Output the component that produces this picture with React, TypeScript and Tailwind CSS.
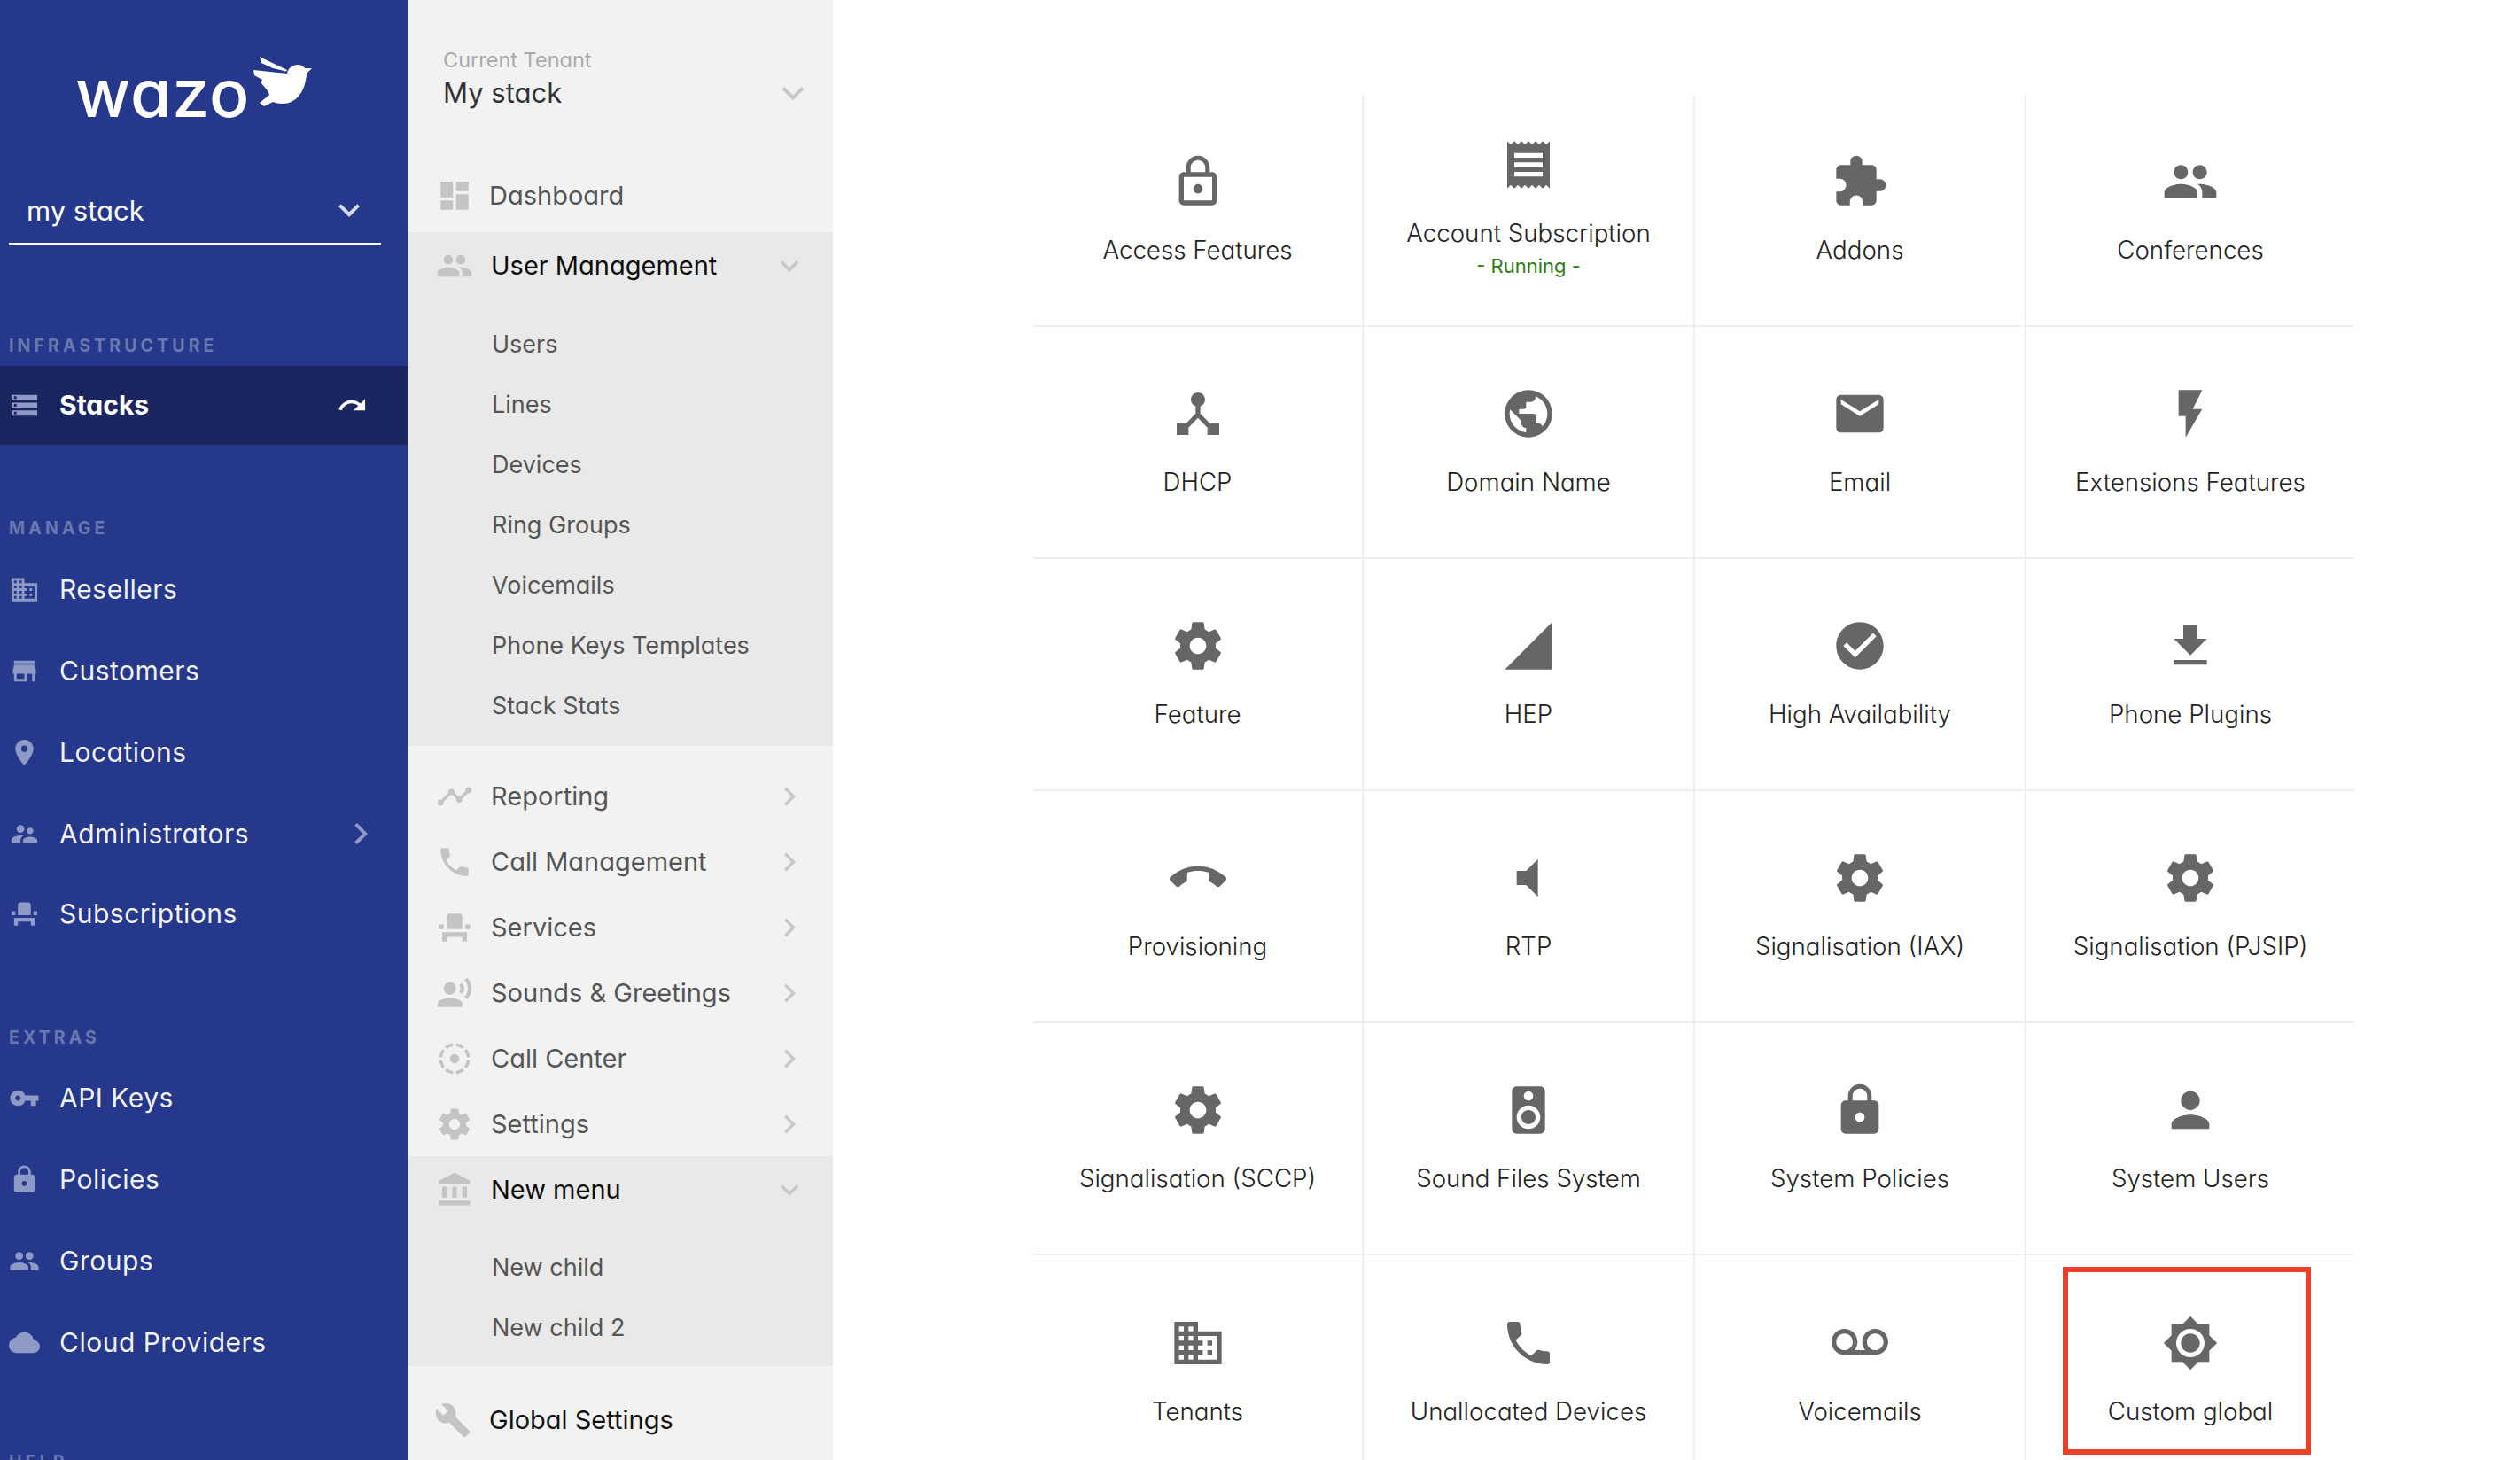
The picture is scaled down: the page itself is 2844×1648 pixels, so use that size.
import React from "react";
import {
  MdLockOutline, MdReceipt, MdExtension, MdPeople, MdDeviceHub, MdPublic, MdEmail, MdFlashOn, MdSignalCellular4Bar,
  MdCheckCircle, MdFileDownload, MdCallEnd, MdVolumeMute, MdSpeaker, MdLock, MdPerson, MdBusiness, MdPhone, MdVoicemail,
  MdBrightness7, MdDashboard, MdTimeline, MdEventSeat, MdRecordVoiceOver, MdFilterTiltShift, MdAccountBalance, MdBuild,
  MdStorage, MdRedo, MdStore, MdPlace, MdSupervisorAccount, MdVpnKey, MdCloud, MdKeyboardArrowDown, MdKeyboardArrowRight,
} from "react-icons/md";

type Ic = React.ComponentType<{ className?: string; size?: number }>;

function Gear({ size = 64, className = "" }: { size?: number; className?: string }) {
  return (
    <svg viewBox="0 0 24 24" width={size} height={size} className={className} fill="currentColor">
      <path d="M19.43 12.98c.04-.32.07-.64.07-.98s-.03-.66-.07-.98l2.11-1.65c.19-.15.24-.42.12-.64l-2-3.46c-.12-.22-.39-.3-.61-.22l-2.49 1c-.52-.4-1.08-.73-1.69-.98l-.38-2.65C14.46 2.18 14.25 2 14 2h-4c-.25 0-.46.18-.49.42l-.38 2.65c-.61.25-1.17.59-1.69.98l-2.49-1c-.23-.09-.49 0-.61.22l-2 3.46c-.13.22-.07.49.12.64l2.11 1.65c-.04.32-.07.65-.07.98s.03.66.07.98l-2.11 1.65c-.19.15-.24.42-.12.64l2 3.46c.12.22.39.3.61.22l2.49-1c.52.4 1.08.73 1.69.98l.38 2.65c.03.24.24.42.49.42h4c.25 0 .46-.18.49-.42l.38-2.65c.61-.25 1.17-.59 1.69-.98l2.49 1c.23.09.49 0 .61-.22l2-3.46c.12-.22.07-.49-.12-.64l-2.11-1.65zM12 15.5c-1.93 0-3.5-1.57-3.5-3.5s1.57-3.5 3.5-3.5 3.5 1.57 3.5 3.5-1.57 3.5-3.5 3.5z" />
    </svg>
  );
}

function Bird() {
  return (
    <svg viewBox="0 0 70 62" width={70} height={62} fill="#ffffff" className="ml-[2px] self-start">
      <path d="M9 2 L40 17 L39 18.500 L24 15 L11 9 Z" />
      <path d="M2 17 L40 21 C41 15 46 11 52 11 C56 11 59 13 60 15 L68 15 L62 21 C62 23 62 25 61 28 C59 42 50 55 35 55 C30 55 27 54 24 53 L14 58 L9 54 L20 45 C19 40 14 36 10 31 L12 28 L3 23 Z" />
    </svg>
  );
}

function Label({ text, cls }: { text: string; cls: string }) {
  return <div className={`h-[26px] px-[10px] flex items-center text-[19.500px] font-bold tracking-[4.100px] text-[#6a78b0] ${cls}`}>{text}</div>;
}

function BlueRow({ icon: I, text, arrow, cls = "" }: { icon: Ic; text: string; arrow?: boolean; cls?: string }) {
  return (
    <div className={`h-[92px] flex items-center pl-[10px] relative ${cls}`}>
      <I size={35} className="text-[#8f99c6] shrink-0" />
      <span className="ml-[22px] text-[30px] tracking-[0.500px] text-white/95">{text}</span>
      {arrow && <MdKeyboardArrowRight size={48} className="absolute left-[383px] text-[#8f99c6]" />}
    </div>
  );
}

function GrayRow({ icon: I, text, open }: { icon: Ic; text: string; open?: boolean }) {
  return (
    <div className="h-[74px] flex items-center pl-[32px] pr-[28px]">
      <I size={42} className="text-[#c4c4c4] shrink-0" />
      <span className={`ml-[20px] flex-1 text-[29px] ${open ? "text-[#0c0c0c]" : "text-[#555555]"}`}>{text}</span>
      {open ? <MdKeyboardArrowDown size={42} className="text-[#c8c8c8]" /> : <MdKeyboardArrowRight size={42} className="text-[#c8c8c8]" />}
    </div>
  );
}

function Sub({ text }: { text: string }) {
  return <div className="h-[68px] flex items-center pl-[95px] text-[27px] text-[#555555]">{text}</div>;
}

const cells: { icon: Ic; label: string; running?: boolean }[] = [
  { icon: MdLockOutline, label: "Access Features" },
  { icon: MdReceipt, label: "Account Subscription", running: true },
  { icon: MdExtension, label: "Addons" },
  { icon: MdPeople, label: "Conferences" },
  { icon: MdDeviceHub, label: "DHCP" },
  { icon: MdPublic, label: "Domain Name" },
  { icon: MdEmail, label: "Email" },
  { icon: MdFlashOn, label: "Extensions Features" },
  { icon: Gear, label: "Feature" },
  { icon: MdSignalCellular4Bar, label: "HEP" },
  { icon: MdCheckCircle, label: "High Availability" },
  { icon: MdFileDownload, label: "Phone Plugins" },
  { icon: MdCallEnd, label: "Provisioning" },
  { icon: MdVolumeMute, label: "RTP" },
  { icon: Gear, label: "Signalisation (IAX)" },
  { icon: Gear, label: "Signalisation (PJSIP)" },
  { icon: Gear, label: "Signalisation (SCCP)" },
  { icon: MdSpeaker, label: "Sound Files System" },
  { icon: MdLock, label: "System Policies" },
  { icon: MdPerson, label: "System Users" },
  { icon: MdBusiness, label: "Tenants" },
  { icon: MdPhone, label: "Unallocated Devices" },
  { icon: MdVoicemail, label: "Voicemails" },
  { icon: MdBrightness7, label: "Custom global" },
];

export default function App() {
  return (
    <div className="flex h-[1648px] w-[2844px] overflow-hidden bg-white [font-family:Inter,sans-serif] [font-feature-settings:'cv11']">
      {/* Primary sidebar */}
      <aside className="w-[460px] shrink-0 bg-[#26388b] overflow-hidden">
        <div className="h-[200px] pl-[85px] pt-[62px] flex">
          <div className="flex items-start">
            <span className="text-[75px] leading-[75px] font-medium text-white tracking-[1px] mt-[5px]">wazo</span>
            <Bird />
          </div>
        </div>
        <div className="mx-[10px] w-[420px] h-[76px] border-b-2 border-white flex items-center pl-[20px] pr-[12px]">
          <span className="flex-1 text-[31px] text-white pt-[3px]">my stack</span>
          <MdKeyboardArrowDown size={48} className="text-[#d5d8ea]" />
        </div>
        <Label text="INFRASTRUCTURE" cls="mt-[102px]" />
        <div className="mt-[9px] h-[89px] bg-[#1b2660] flex items-center pl-[10px]">
          <MdStorage size={35} className="text-[#8f99c6] shrink-0" />
          <span className="ml-[22px] flex-1 text-[30px] font-bold text-white">Stacks</span>
          <MdRedo size={35} className="text-white mr-[45px]" />
        </div>
        <Label text="MANAGE" cls="mt-[82px] mb-[9px]" />
        <BlueRow icon={MdBusiness} text="Resellers" />
        <BlueRow icon={MdStore} text="Customers" />
        <BlueRow icon={MdPlace} text="Locations" />
        <BlueRow icon={MdSupervisorAccount} text="Administrators" arrow />
        <BlueRow icon={MdEventSeat} text="Subscriptions" cls="-mt-[2px]" />
        <Label text="EXTRAS" cls="mt-[82px] mb-[8px]" />
        <BlueRow icon={MdVpnKey} text="API Keys" />
        <BlueRow icon={MdLock} text="Policies" />
        <BlueRow icon={MdPeople} text="Groups" />
        <BlueRow icon={MdCloud} text="Cloud Providers" />
        <Label text="HELP" cls="mt-[77px]" />
      </aside>

      {/* Secondary sidebar */}
      <aside className="w-[480px] shrink-0 bg-[#f2f2f2] overflow-hidden">
        <div className="h-[175px] pl-[40px] pr-[20px] pt-[52px]">
          <div className="text-[23.500px] leading-[32px] text-[#aaaaaa]">Current Tenant</div>
          <div className="flex items-center h-[42px]">
            <span className="flex-1 text-[31px] text-[#333333]">My stack</span>
            <MdKeyboardArrowDown size={50} className="text-[#c8c8c8]" />
          </div>
        </div>
        <div className="h-[87px] flex items-center pl-[32px] pt-[4px]">
          <MdDashboard size={42} className="text-[#c4c4c4] shrink-0" />
          <span className="ml-[18px] text-[29px] text-[#555555]">Dashboard</span>
        </div>
        <div className="bg-[#e9e9e9] h-[580px] pt-[1px]">
          <GrayRow icon={MdPeople} text="User Management" open />
          <div className="mt-[18px]">
            {["Users", "Lines", "Devices", "Ring Groups", "Voicemails", "Phone Keys Templates", "Stack Stats"].map((t) => (
              <Sub key={t} text={t} />
            ))}
          </div>
        </div>
        <div className="pt-[20px] h-[463px]">
          <GrayRow icon={MdTimeline} text="Reporting" />
          <GrayRow icon={MdPhone} text="Call Management" />
          <GrayRow icon={MdEventSeat} text="Services" />
          <GrayRow icon={MdRecordVoiceOver} text="Sounds & Greetings" />
          <GrayRow icon={MdFilterTiltShift} text="Call Center" />
          <GrayRow icon={Gear} text="Settings" />
        </div>
        <div className="bg-[#e9e9e9] h-[237px] pt-[1px] relative">
          <GrayRow icon={MdAccountBalance} text="New menu" open />
          <div className="mt-[17px]">
            <Sub text="New child" />
            <Sub text="New child 2" />
          </div>
        </div>
        <div className="h-[106px] flex items-center pl-[30px] pt-[15px]">
          <MdBuild size={42} className="text-[#c4c4c4] shrink-0" />
          <span className="ml-[20px] text-[29px] text-[#111111]">Global Settings</span>
        </div>
      </aside>

      {/* Content grid */}
      <main className="flex-1 pl-[226px] pt-[107px]">
        <div className="grid grid-cols-[373px_374px_374px_370px] auto-rows-[262px]">
          {cells.map((c, i) => {
            const I = c.icon;
            const isLastCol = i % 4 === 3;
            const isLastRow = i >= 20;
            return (
              <div
                key={c.label}
                className={`relative flex flex-col items-center justify-center pb-[2px] border-[#eeeeee] ${isLastCol ? "" : "border-r-2"} ${isLastRow ? "" : "border-b-2"}`}
              >
                <I size={64} className="text-[#666666]" />
                <div className="mt-[27px] text-[27.700px] leading-[36px] font-[350] text-[#222222] whitespace-nowrap">{c.label}</div>
                {c.running && <div className="text-[22px] leading-[38px] text-[#2f7d12]">- Running -</div>}
                {c.label === "Custom global" && (
                  <div className="absolute left-[41px] top-[13px] w-[280px] h-[212px] border-[6px] border-[#e8432a]" />
                )}
              </div>
            );
          })}
        </div>
      </main>
    </div>
  );
}
